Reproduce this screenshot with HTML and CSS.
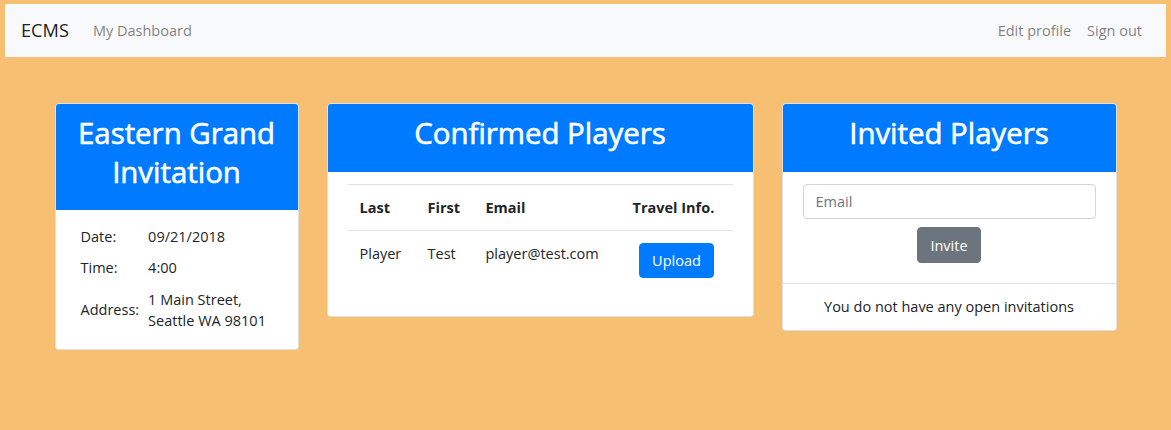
FILE: index.html
```html
<!DOCTYPE html>
<html lang="en">
<head>
<meta charset="utf-8">
<title>ECMS - My Dashboard</title>
<link rel="stylesheet" href="styles.css">
</head>
<body>
<nav class="navbar">
  <a class="brand" href="#">ECMS</a>
  <ul class="nav-list">
    <li><a class="nav-link" href="#">My Dashboard</a></li>
  </ul>
  <ul class="nav-list nav-right">
    <li><a class="nav-link" href="#">Edit profile</a></li>
    <li><a class="nav-link" href="#">Sign out</a></li>
  </ul>
</nav>

<main class="cards">
  <section class="card">
    <header class="card-header"><h2>Eastern Grand Invitation</h2></header>
    <div class="card-body event-body">
      <table class="details">
        <tr><td class="label">Date:</td><td>09/21/2018</td></tr>
        <tr><td class="label">Time:</td><td>4:00</td></tr>
        <tr><td class="label">Address:</td><td>1 Main Street,<br>Seattle WA 98101</td></tr>
      </table>
    </div>
  </section>

  <section class="card">
    <header class="card-header"><h2>Confirmed Players</h2></header>
    <div class="card-body players-body">
      <table class="players">
        <colgroup>
          <col class="col-last"><col class="col-first"><col class="col-email"><col class="col-travel">
        </colgroup>
        <thead>
          <tr><th>Last</th><th>First</th><th>Email</th><th>Travel Info.</th></tr>
        </thead>
        <tbody>
          <tr><td>Player</td><td>Test</td><td>player@test.com</td><td class="center"><button class="btn btn-primary">Upload</button></td></tr>
        </tbody>
      </table>
    </div>
  </section>

  <section class="card">
    <header class="card-header"><h2>Invited Players</h2></header>
    <div class="card-body invite-body">
      <input class="form-control" type="email" placeholder="Email">
      <div class="invite-actions"><button class="btn btn-secondary">Invite</button></div>
    </div>
    <div class="card-footer">You do not have any open invitations</div>
  </section>
</main>
</body>
</html>
```
FILE: styles.css
```css
* { box-sizing: border-box; }

html, body { height: 100%; }

body {
  margin: 0;
  padding: 4px 5px 0;
  background: #f7bf72;
  color: #212529;
  font-family: "Open Sans", "Noto Sans", sans-serif;
  font-size: 14.5px;
  line-height: 21.3px;
}

a { text-decoration: none; }

/* navbar */
.navbar {
  display: flex;
  align-items: center;
  padding: 8px 16px;
  background: #f8f9fa;
}
.brand {
  font-size: 18.2px;
  line-height: 26.6px;
  padding: 5px 0;
  margin-right: 16px;
  color: rgba(0, 0, 0, 0.9);
}
.nav-list {
  display: flex;
  list-style: none;
  margin: 0;
  padding: 0;
}
.nav-right { margin-left: auto; }
.nav-link {
  display: block;
  padding: 8px;
  color: rgba(0, 0, 0, 0.5);
}

/* cards layout */
.cards {
  display: grid;
  grid-template-columns: 244px 427px 335px;
  column-gap: 28px;
  justify-content: center;
  align-items: start;
  margin-top: 46px;
}
.card {
  background: #fff;
  border: 1px solid rgba(0, 0, 0, 0.125);
  border-radius: 4px;
  overflow: hidden;
}
.card-header {
  background: #007bff;
  color: #fff;
  text-align: center;
  padding: 10px 20px 19px;
}
.card-header h2 {
  margin: 0;
  font-size: 29.4px;
  font-weight: 400;
  line-height: 38.4px;
  -webkit-text-stroke: 0.6px #fff;
}

/* event details */
.event-body { padding: 11px 20px 13px; }
.details { border-collapse: collapse; }
.details td {
  padding: 5px;
  vertical-align: middle;
}
.details .label { width: 65px; padding-right: 4px; }

/* confirmed players */
.players-body { padding: 12px 20px 10px; }
.players {
  width: 100%;
  table-layout: fixed;
  border-collapse: collapse;
  margin-bottom: 16px;
}
.col-last { width: 68px; }
.col-first { width: 58px; }
.col-travel { width: 112px; }
.players th, .players td {
  padding: 12px;
  border-top: 1px solid #dee2e6;
  text-align: left;
  vertical-align: top;
  white-space: nowrap;
}
.players th { font-weight: 700; }
.players td.center { text-align: center; }

/* buttons */
.btn {
  display: inline-block;
  font-family: inherit;
  font-size: 14.5px;
  line-height: 21.3px;
  padding: 6px 12px;
  border: 1px solid transparent;
  border-radius: 4px;
  color: #fff;
}
.btn-primary { background: #007bff; border-color: #007bff; }
.btn-secondary { background: #6c757d; border-color: #6c757d; padding: 6.5px 12px; }

/* invite */
.invite-body { padding: 12px 20px 20px; }
.form-control {
  display: block;
  width: 100%;
  padding: 6px 12px;
  font-family: inherit;
  font-size: 14.5px;
  line-height: 21.3px;
  color: #495057;
  background: #fff;
  border: 1px solid #ced4da;
  border-radius: 4px;
}
.form-control::placeholder { color: #6c757d; }
.invite-actions {
  display: flex;
  justify-content: center;
  margin-top: 8px;
}
.card-footer {
  border-top: 1px solid rgba(0, 0, 0, 0.125);
  padding: 12px 20px;
  text-align: center;
}
```
